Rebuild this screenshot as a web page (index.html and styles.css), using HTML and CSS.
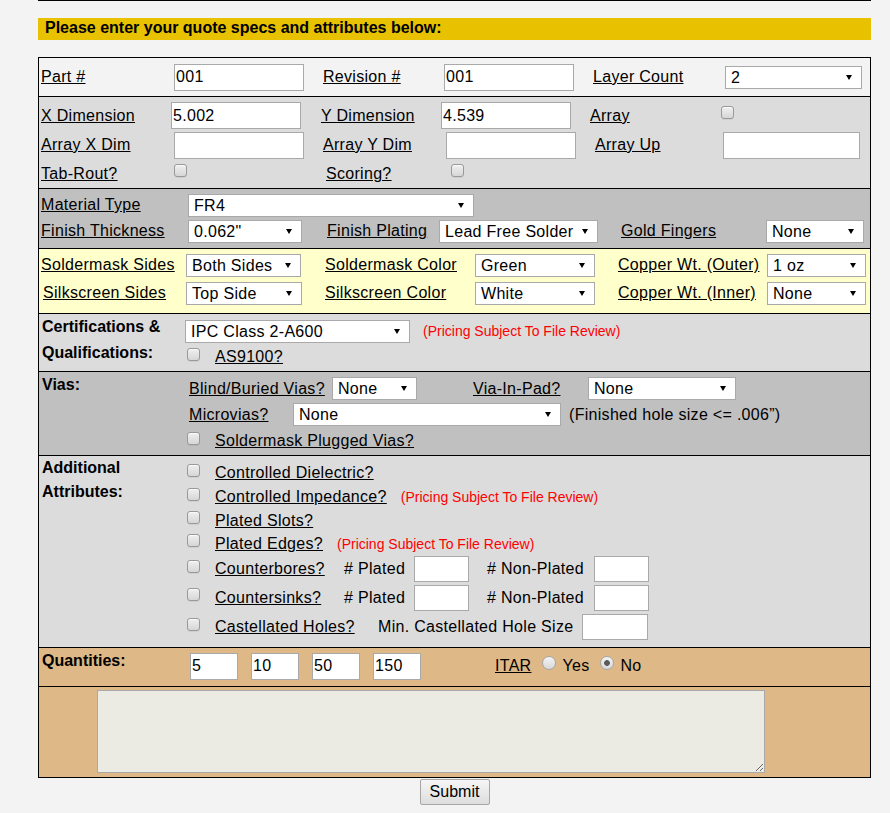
FILE: index.html
```html
<!DOCTYPE html>
<html lang="en">
<head>
<meta charset="utf-8">
<title>Quote specs</title>
<link rel="stylesheet" href="styles.css">
</head>
<body>
<div class="topline"></div>
<h2 class="banner">Please enter your quote specs and attributes below:</h2>
<form class="quote">
  <div class="box">
    <section class="sec sec-1">
      <div class="row r-part">
        <a class="lbl lbl-first" href="#">Part #</a>
        <input class="txt w130 h27" type="text" value="001">
        <a class="lbl" href="#">Revision #</a>
        <input class="txt w130 h27" type="text" value="001">
        <a class="lbl" href="#">Layer Count</a>
        <span class="sel w137"><select><option>2</option></select></span>
      </div>
    </section>

    <section class="sec sec-2">
      <div class="row r-dim">
        <a class="lbl lbl-first" href="#">X Dimension</a>
        <input class="txt w130 h27" type="text" value="5.002">
        <a class="lbl" href="#">Y Dimension</a>
        <input class="txt w130 h27" type="text" value="4.539">
        <a class="lbl" href="#">Array</a>
        <input class="cb" type="checkbox">
      </div>
      <div class="row r-arr">
        <a class="lbl lbl-first" href="#">Array X Dim</a>
        <input class="txt w130 h27" type="text">
        <a class="lbl" href="#">Array Y Dim</a>
        <input class="txt w130 h27" type="text">
        <a class="lbl" href="#">Array Up</a>
        <input class="txt w137 h27" type="text">
      </div>
      <div class="row r-tab">
        <a class="lbl lbl-first" href="#">Tab-Rout?</a>
        <input class="cb" type="checkbox">
        <a class="lbl" href="#">Scoring?</a>
        <input class="cb" type="checkbox">
      </div>
    </section>

    <section class="sec sec-3">
      <div class="row r-mat">
        <a class="lbl lbl-first" href="#">Material Type</a>
        <span class="sel w286"><select><option>FR4</option></select></span>
      </div>
      <div class="row r-fin">
        <a class="lbl lbl-first" href="#">Finish Thickness</a>
        <span class="sel w114"><select><option>0.062"</option></select></span>
        <a class="lbl" href="#">Finish Plating</a>
        <span class="sel w159"><select><option>Lead Free Solder</option></select></span>
        <a class="lbl" href="#">Gold Fingers</a>
        <span class="sel w98"><select><option>None</option></select></span>
      </div>
    </section>

    <section class="sec sec-4">
      <div class="row r-sm">
        <a class="lbl lbl-first" href="#">Soldermask Sides</a>
        <span class="sel w115"><select><option>Both Sides</option></select></span>
        <a class="lbl" href="#">Soldermask Color</a>
        <span class="sel w120"><select><option>Green</option></select></span>
        <a class="lbl" href="#">Copper Wt. (Outer)</a>
        <span class="sel w99"><select><option>1 oz</option></select></span>
      </div>
      <div class="row r-sm">
        <a class="lbl lbl-first lbl-in" href="#">Silkscreen Sides</a>
        <span class="sel w116"><select><option>Top Side</option></select></span>
        <a class="lbl" href="#">Silkscreen Color</a>
        <span class="sel w120"><select><option>White</option></select></span>
        <a class="lbl" href="#">Copper Wt. (Inner)</a>
        <span class="sel w99"><select><option>None</option></select></span>
      </div>
    </section>

    <section class="sec sec-5 split">
      <div class="title">Certifications &amp;<br>Qualifications:</div>
      <div class="stack pt4">
        <div class="line h26">
          <span class="sel w225"><select><option>IPC Class 2-A600</option></select></span>
          <span class="note note-cert">(Pricing Subject To File Review)</span>
        </div>
        <div class="line h26">
          <input class="cb cb-lead" type="checkbox">
          <a class="lbl lbl-after" href="#">AS9100?</a>
        </div>
      </div>
    </section>

    <section class="sec sec-6 split">
      <div class="title">Vias:</div>
      <div class="stack pt4">
        <div class="row r-via1">
          <a class="lbl lbl-via" href="#">Blind/Buried Vias?</a>
          <span class="sel w85"><select><option>None</option></select></span>
          <a class="lbl" href="#">Via-In-Pad?</a>
          <span class="sel w148"><select><option>None</option></select></span>
        </div>
        <div class="row r-via2">
          <a class="lbl lbl-via" href="#">Microvias?</a>
          <span class="sel w268"><select><option>None</option></select></span>
          <span class="plain hole">(Finished hole size &lt;= .006”)</span>
        </div>
        <div class="line h26">
          <input class="cb cb-lead" type="checkbox">
          <a class="lbl lbl-after" href="#">Soldermask Plugged Vias?</a>
        </div>
      </div>
    </section>

    <section class="sec sec-7 split">
      <div class="title title-tight">Additional<br>Attributes:</div>
      <div class="stack pt5">
        <div class="line h24">
          <input class="cb cb-lead" type="checkbox">
          <a class="lbl lbl-after" href="#">Controlled Dielectric?</a>
        </div>
        <div class="line h24">
          <input class="cb cb-lead" type="checkbox">
          <a class="lbl lbl-after" href="#">Controlled Impedance?</a>
          <span class="note note-gap">(Pricing Subject To File Review)</span>
        </div>
        <div class="line h23">
          <input class="cb cb-lead" type="checkbox">
          <a class="lbl lbl-after" href="#">Plated Slots?</a>
        </div>
        <div class="line h23">
          <input class="cb cb-lead" type="checkbox">
          <a class="lbl lbl-after" href="#">Plated Edges?</a>
          <span class="note note-gap">(Pricing Subject To File Review)</span>
        </div>
        <div class="row r-bore h28">
          <span class="pair">
            <input class="cb cb-lead" type="checkbox">
            <a class="lbl lbl-after" href="#">Counterbores?</a>
          </span>
          <span class="plain"># Plated</span>
          <input class="txt w55 h26" type="text">
          <span class="plain"># Non-Plated</span>
          <input class="txt w55 h26" type="text">
        </div>
        <div class="row r-bore h29">
          <span class="pair">
            <input class="cb cb-lead" type="checkbox">
            <a class="lbl lbl-after" href="#">Countersinks?</a>
          </span>
          <span class="plain"># Plated</span>
          <input class="txt w55 h26" type="text">
          <span class="plain"># Non-Plated</span>
          <input class="txt w55 h26" type="text">
        </div>
        <div class="row r-cast h30">
          <span class="pair">
            <input class="cb cb-lead" type="checkbox">
            <a class="lbl lbl-after" href="#">Castellated Holes?</a>
          </span>
          <span class="plain">Min. Castellated Hole Size</span>
          <input class="txt w66 h26" type="text">
        </div>
      </div>
    </section>

    <section class="sec sec-8 qty">
      <div class="title">Quantities:</div>
      <div class="qty-row">
        <input class="txt w48 h27" type="text" value="5">
        <input class="txt w48 h27" type="text" value="10">
        <input class="txt w48 h27" type="text" value="50">
        <input class="txt w48 h27" type="text" value="150">
        <a class="lbl itar" href="#">ITAR</a>
        <input class="rb" type="radio" name="itar">
        <span class="plain rb-lbl">Yes</span>
        <input class="rb" type="radio" name="itar" checked>
        <span class="plain rb-lbl">No</span>
      </div>
    </section>

    <section class="sec sec-9">
      <textarea class="notes"></textarea>
    </section>
  </div>
  <div class="actions">
    <button type="button" class="btn">Submit</button>
  </div>
</form>
</body>
</html>
```

FILE: styles.css
```css
* { box-sizing: border-box; }

html, body {
  margin: 0;
  padding: 0;
  background: #f3f3f3;
}

body {
  font-family: "Liberation Sans", Arial, sans-serif;
  font-size: 16px;
  color: #000;
}

.topline {
  margin: 0 19px 0 38px;
  border-top: 1px solid #000;
}

.banner {
  margin: 17px 19px 0 38px;
  height: 22px;
  padding: 0 0 3px 7px;
  background: #e8c200;
  font-size: 16px;
  font-weight: bold;
  line-height: 19px;
  color: #000;
}

.quote {
  margin: 0;
}

.box {
  margin: 17px 19px 0 38px;
  border: 1px solid #000;
}

.sec {
  border-bottom: 1px solid #000;
}

.sec-1 { height: 39px; background: #f3f3f3; }
.sec-2 { height: 92px; background: #dcdcdc; padding-top: 4px; }
.sec-3 { height: 60px; background: #c0c0c0; padding-top: 3px; }
.sec-4 { height: 65px; background: #ffffcc; padding-top: 2px; }
.sec-5 { height: 58px; background: #dcdcdc; }
.sec-6 { height: 84px; background: #c0c0c0; }
.sec-7 { height: 192px; background: #dcdcdc; }
.sec-8 { height: 39px; background: #deb887; }
.sec-9 { height: 90px; background: #deb887; border-bottom: 0; padding: 3px 0 0 58px; }

/* rows */
.row {
  display: grid;
  align-items: center;
  justify-items: start;
  justify-content: start;
}

.r-part { grid-template-columns: 135px 149px 121px 149px 132px auto; height: 38px; }
.r-dim  { grid-template-columns: 132px 150px 120px 149px 131px auto; height: 29px; }
.r-arr  { grid-template-columns: 135px 149px 123px 149px 128px auto; height: 30px; }
.r-tab  { grid-template-columns: 135px 152px 125px auto; height: 27px; }
.r-mat  { grid-template-columns: 149px auto; height: 26px; }
.r-fin  { grid-template-columns: 149px 139px 112px 182px 145px auto; height: 26px; }
.r-sm   { grid-template-columns: 147px 139px 150px 143px 149px auto; height: 28px; }
.r-via1 { grid-template-columns: 147px 141px 115px auto; height: 25px; }
.r-via2 { grid-template-columns: 108px auto auto; height: 27px; }
.r-bore { grid-template-columns: 159px 70px 73px 107px auto; }
.r-cast { grid-template-columns: 193px 204px auto; }

.split {
  display: grid;
  grid-template-columns: 146px 1fr;
}

.title {
  padding-left: 3px;
  font-weight: bold;
  font-size: 16px;
  line-height: 26px;
}

.title-tight { line-height: 24px; }

.stack {
  display: flex;
  flex-direction: column;
}

.pt4 { padding-top: 4px; }
.pt5 { padding-top: 5px; }

.line {
  display: flex;
  align-items: center;
}

.h23 { height: 23px; }
.h24 { height: 24px; }
.h26 { height: 26px; }
.h28 { height: 28px; }
.h29 { height: 29px; }
.h30 { height: 30px; }

.pair {
  display: flex;
  align-items: center;
}

/* text */
.lbl {
  color: #000;
  text-decoration: underline;
  letter-spacing: 0.3px;
  white-space: nowrap;
  line-height: 18px;
}

.lbl-first { padding-left: 2px; }
.lbl-in { padding-left: 4px; }
.lbl-via { padding-left: 4px; }
.lbl-after { margin-left: 15px; }

.plain {
  letter-spacing: 0.3px;
  white-space: nowrap;
  line-height: 18px;
}

.hole { margin-left: 8px; }

.note {
  color: #ff0000;
  font-size: 14px;
  white-space: nowrap;
}

.note-cert { margin-left: 13px; }
.note-gap { margin-left: 14px; }

/* inputs */
.txt {
  border: 1px solid #a9a9a9;
  background: #fff;
  font-family: "Liberation Sans", Arial, sans-serif;
  font-size: 16px;
  letter-spacing: 0.3px;
  color: #000;
  padding: 0 1px;
  margin: 0;
  border-radius: 0;
  outline: none;
}

.w48 { width: 48px; }
.w55 { width: 55px; }
.w66 { width: 66px; }
.w130 { width: 130px; }
.w137 { width: 137px; }
.h26.txt { height: 26px; }
.h27 { height: 27px; }

.sel {
  position: relative;
  display: inline-block;
  height: 23px;
}

.sel::after {
  content: "";
  position: absolute;
  right: 10px;
  top: 9px;
  width: 0;
  height: 0;
  border-left: 3px solid transparent;
  border-right: 3px solid transparent;
  border-top: 5px solid #000;
  pointer-events: none;
}

.sel select {
  -webkit-appearance: none;
  appearance: none;
  display: block;
  width: 100%;
  height: 23px;
  margin: 0;
  padding: 0 18px 0 5px;
  border: 1px solid #a9a9a9;
  border-radius: 0;
  background: #fff;
  font-family: "Liberation Sans", Arial, sans-serif;
  font-size: 16px;
  letter-spacing: 0.3px;
  color: #000;
  outline: none;
}

.w85 { width: 85px; }
.w98 { width: 98px; }
.w99 { width: 99px; }
.w114 { width: 114px; }
.w115 { width: 115px; }
.w116 { width: 116px; }
.w120 { width: 120px; }
.sel.w137 { width: 137px; }
.w148 { width: 148px; }
.w159 { width: 159px; }
.w225 { width: 225px; }
.w268 { width: 268px; }
.w286 { width: 286px; }

.cb {
  -webkit-appearance: none;
  appearance: none;
  width: 13px;
  height: 13px;
  margin: 0 0 6px 0;
  border: 1px solid #999;
  border-radius: 3px;
  background: linear-gradient(#f0f0f0, #d6d6d6);
  box-shadow: inset 0 1px 0 #fafafa, 0 1px 0 rgba(0, 0, 0, 0.06);
}

.cb-lead { margin-left: 2px; }

.rb {
  -webkit-appearance: none;
  appearance: none;
  width: 14px;
  height: 14px;
  margin: 0 0 7px 11px;
  border: 1px solid #a6a6a6;
  border-radius: 50%;
  background: linear-gradient(#f4f4f4, #d8d8d8);
}

.rb:checked {
  background: radial-gradient(circle, #5a5a5a 0 2.5px, transparent 3.2px), linear-gradient(#f4f4f4, #d8d8d8);
}

.rb-lbl { margin-left: 6px; }

/* quantities */
.qty {
  display: grid;
  grid-template-columns: 151px 1fr;
}

.qty-row {
  display: flex;
  align-items: center;
  height: 37px;
  padding-bottom: 1px;
}

.qty-row .txt + .txt { margin-left: 13px; }
.itar { margin-left: 74px; }

.notes {
  display: block;
  width: 668px;
  height: 83px;
  margin: 0;
  border: 1px solid #a9a9a9;
  background: #ebeae3;
  font-family: "Liberation Sans", Arial, sans-serif;
  font-size: 14px;
  outline: none;
}

.actions {
  display: flex;
  justify-content: center;
  margin: 1px 19px 0 38px;
}

.btn {
  width: 70px;
  height: 26px;
  margin: 0;
  padding: 0;
  border: 1px solid #a6a6a6;
  border-radius: 2px;
  background: linear-gradient(#f6f6f6, #dddddd);
  font-family: "Liberation Sans", Arial, sans-serif;
  font-size: 16px;
  color: #000;
}
```
